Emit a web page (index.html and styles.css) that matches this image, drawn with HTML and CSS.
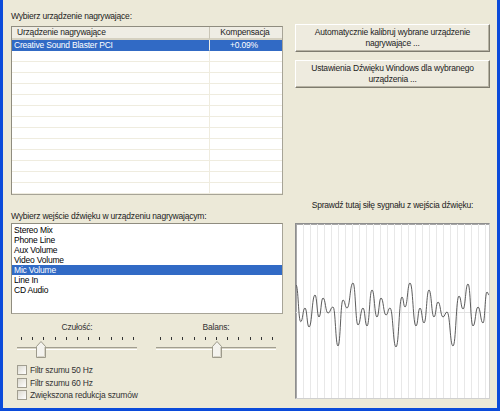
FILE: index.html
```html
<!DOCTYPE html>
<html lang="pl">
<head>
    <meta charset="UTF-8">
    <title>Kalibracja urządzenia nagrywającego</title>
    <link rel="stylesheet" href="styles.css">
</head>
<body>
    <div class="window">
        <!-- Lista urządzeń -->
        <div class="devices">
            <div class="caption">Wybierz urządzenie nagrywające:</div>
            <div class="listview">
                <table class="grid">
                    <thead>
                        <tr>
                            <th class="col-name">Urządzenie nagrywające</th>
                            <th class="col-comp">Kompensacja</th>
                        </tr>
                    </thead>
                    <tbody>
                        <tr class="selected"><td>Creative Sound Blaster PCI</td><td class="num">+0.09%</td></tr>
                        <tr><td></td><td></td></tr>
                        <tr><td></td><td></td></tr>
                        <tr><td></td><td></td></tr>
                        <tr><td></td><td></td></tr>
                        <tr><td></td><td></td></tr>
                        <tr><td></td><td></td></tr>
                        <tr><td></td><td></td></tr>
                        <tr><td></td><td></td></tr>
                        <tr><td></td><td></td></tr>
                        <tr><td></td><td></td></tr>
                        <tr><td></td><td></td></tr>
                        <tr><td></td><td></td></tr>
                        <tr><td></td><td></td></tr>
                    </tbody>
                </table>
            </div>
        </div>

        <div class="actions">
            <button class="btn">Automatycznie kalibruj wybrane urządzenie<br>nagrywające ...</button>
            <button class="btn">Ustawienia Dźwięku Windows dla wybranego<br>urządzenia ...</button>
        </div>

        <!-- Wejścia -->
        <div class="inputs">
            <div class="caption">Wybierz wejście dźwięku w urządzeniu nagrywającym:</div>
            <ul class="listbox">
                <li>Stereo Mix</li>
                <li>Phone Line</li>
                <li>Aux Volume</li>
                <li>Video Volume</li>
                <li class="selected">Mic Volume</li>
                <li>Line In</li>
                <li>CD Audio</li>
            </ul>

            <div class="sliders">
                <div class="slider-group">
                    <div class="slider-label">Czułość:</div>
                    <div class="slider">
                        <div class="ticks">
                            <span></span><span></span><span></span><span></span><span></span><span></span>
                            <span></span><span></span><span></span><span></span><span></span>
                        </div>
                        <div class="track"></div>
                        <svg class="thumb thumb-sens" width="10" height="17" viewBox="0 0 10 17">
                            <path d="M0.5 5.5 L5 0.5 L9.5 5.5 V16.5 H0.5 Z" fill="#F4F3EE" stroke="#9D9A8B"/>
                            <path d="M8.5 6 V15.5 H1.5" fill="none" stroke="#D6D3C6"/>
                        </svg>
                    </div>
                </div>
                <div class="slider-group">
                    <div class="slider-label">Balans:</div>
                    <div class="slider">
                        <div class="ticks">
                            <span></span><span></span><span></span><span></span><span></span><span></span>
                            <span></span><span></span><span></span><span></span><span></span>
                        </div>
                        <div class="track"></div>
                        <svg class="thumb thumb-bal" width="10" height="17" viewBox="0 0 10 17">
                            <path d="M0.5 5.5 L5 0.5 L9.5 5.5 V16.5 H0.5 Z" fill="#F4F3EE" stroke="#9D9A8B"/>
                            <path d="M8.5 6 V15.5 H1.5" fill="none" stroke="#D6D3C6"/>
                        </svg>
                    </div>
                </div>
            </div>

            <div class="checks">
                <label class="check"><span class="box"></span>Filtr szumu 50 Hz</label>
                <label class="check"><span class="box"></span>Filtr szumu 60 Hz</label>
                <label class="check"><span class="box"></span>Zwiększona redukcja szumów</label>
            </div>
        </div>

        <!-- Podgląd sygnału -->
        <div class="meter">
            <div class="caption center">Sprawdź tutaj siłę sygnału z wejścia dźwięku:</div>
            <div class="scope">
                <svg width="193" height="174" viewBox="296 224 193 174">
                    <path stroke="#E8E8E8" stroke-width="1" fill="none"
                        d="M303.5 224V398M310.5 224V398M317.5 224V398M324.5 224V398M331.5 224V398M338.5 224V398M345.5 224V398M352.5 224V398M359.5 224V398M366.5 224V398M373.5 224V398M380.5 224V398M387.5 224V398M394.5 224V398M401.5 224V398M408.5 224V398M415.5 224V398M422.5 224V398M429.5 224V398M436.5 224V398M443.5 224V398M450.5 224V398M457.5 224V398M464.5 224V398M471.5 224V398M478.5 224V398M485.5 224V398"/>
                    <path stroke="#E2E2E2" d="M296 312.5H489"/>
                    <path stroke="#4A4A4A" stroke-width="0.9" fill="none"
                        d="M296 285C298.35 285 298.35 321.7 300.7 321.7C302.85 321.7 302.85 308 305 308C307 308 307 327 309 327C312 327 312 295 315 295C317 295 317 317 319 317C321 317 321 298 323 298C325.5 298 325.5 313 328 313C330.5 313 330.5 307 333 307C335.5 307 335.5 346 338 346C340.5 346 340.5 300 343 300C345 300 345 308 347 308C350 308 350 283 353 283C355.5 283 355.5 325 358 325C360.5 325 360.5 308 363 308C365 308 365 326 367 326C369.5 326 369.5 290 372 290C374.5 290 374.5 317 377 317C379 317 379 298 381 298C383.5 298 383.5 315 386 315C388 315 388 308 390 308C393 308 393 347 396 347C399 347 399 297 402 297C403.5 297 403.5 307 405 307C407.5 307 407.5 283 410 283C413 283 413 326 416 326C418 326 418 308 420 308C422 308 422 323 424 323C426.5 323 426.5 290 429 290C431.5 290 431.5 317 434 317C436 317 436 302 438 302C440.5 302 440.5 317 443 317C445 317 445 312 447 312C450 312 450 346 453 346C456 346 456 296 459 296C461 296 461 309 463 309C465.5 309 465.5 284 468 284C470.5 284 470.5 326 473 326C475.5 326 475.5 307 478 307C480.5 307 480.5 323 483 323C485 323 485 292 487 292C488 292 488 295 489 295"/>
                </svg>
            </div>
        </div>
    </div>
</body>
</html>
```

FILE: styles.css
```css
* {
    margin: 0;
    padding: 0;
    box-sizing: border-box;
}

body {
    font: 8.5px/10px "Liberation Sans", Arial, sans-serif;
    letter-spacing: -0.2px;
    color: #000;
    background: #ECE9D8;
}

/* Window frame */
.window {
    width: 500px;
    height: 411px;
    background: #ECE9D8;
    border: 3px solid #0B4BDA;
    border-top: 0;
    padding: 11px 7px 0 8px;
    display: grid;
    grid-template-columns: 272px 195px;
    grid-template-rows: 184px auto;
    column-gap: 12px;
}

.caption {
    height: 10px;
    white-space: nowrap;
    color: #222;
}

.caption.center {
    text-align: center;
}

/* Device list */
.devices .caption {
    margin-bottom: 5px;
}

.listview {
    height: 169px;
    background: #fff;
    border: 1px solid #A7A497;
    border-top-color: #8F8C7F;
    border-left-color: #8F8C7F;
    overflow: hidden;
}

.grid {
    width: 100%;
    border-collapse: separate;
    border-spacing: 0;
    table-layout: fixed;
}

.grid th {
    height: 13px;
    font-weight: normal;
    text-align: left;
    line-height: 11px;
    padding: 0 0 0 5px;
    background: #EFEDE4;
    border-bottom: 2px solid #D5D1C1;
    color: #222;
}

.grid th.col-name {
    border-right: 1px solid #C9C5B6;
}

.grid th.col-comp {
    width: 72px;
    text-align: center;
    padding: 0 2px 0 0;
}

.grid td {
    height: 11px;
    line-height: 10px;
    padding: 0 0 0 2px;
    border-bottom: 1px solid #EFECDF;
    white-space: nowrap;
    overflow: hidden;
}

.grid td:first-child {
    border-right: 1px solid #EFECDF;
}

.grid td.num {
    text-align: center;
    padding: 0 4px 0 0;
}

.grid tr.selected td {
    background: #316AC5;
    color: #fff;
    border-bottom-color: #316AC5;
}

.grid tr.selected td:first-child {
    border-right-color: #F0EEE4;
}

/* Buttons */
.actions {
    padding-top: 13px;
    display: flex;
    flex-direction: column;
    gap: 8px;
}

.btn {
    height: 28px;
    font: 8.5px/11px "Liberation Sans", Arial, sans-serif;
    letter-spacing: -0.2px;
    color: #222;
    background: #EEEBDF;
    border: 1px solid;
    border-color: #FFFFFF #7E7B6E #7E7B6E #FFFFFF;
    box-shadow: inset -1px -1px 0 #B7B3A4;
    text-align: center;
    padding-bottom: 1px;
}

/* Input list */
.inputs {
    padding-top: 16px;
}

.inputs .caption {
    margin-bottom: 2px;
}

.listbox {
    list-style: none;
    height: 91px;
    background: #fff;
    border: 1px solid #A7A497;
    border-top-color: #8F8C7F;
    border-left-color: #8F8C7F;
}

.listbox li {
    height: 10px;
    line-height: 10px;
    padding-left: 2px;
}

.listbox li:first-child {
    margin-top: 1px;
}

.listbox li.selected {
    background: #316AC5;
    color: #fff;
}

/* Sliders */
.sliders {
    display: flex;
    gap: 19px;
    padding-left: 6px;
    margin-top: 8px;
}

.slider-group {
    width: 120px;
}

.slider-label {
    height: 10px;
    text-align: center;
    color: #333;
}

.slider {
    position: relative;
    height: 22px;
    margin-top: 4px;
}

.ticks {
    display: flex;
    justify-content: space-between;
    padding: 1px 3px 0 4px;
}

.ticks span {
    width: 1px;
    height: 3px;
    background: #333;
}

.track {
    margin-top: 7px;
    height: 3px;
    border-top: 1px solid #A19E90;
    border-bottom: 1px solid #fff;
    background: #DCD8C8;
}

.thumb {
    position: absolute;
    top: 5px;
}

.thumb-sens {
    left: 19px;
}

.thumb-bal {
    left: 56px;
}

/* Checkboxes */
.checks {
    margin-top: 6px;
    padding-left: 6px;
}

.check {
    display: flex;
    align-items: center;
    gap: 3px;
    height: 12.5px;
    color: #333;
}

.box {
    width: 10px;
    height: 10px;
    border: 1px solid #A19E90;
    background: linear-gradient(135deg, #DCDAD0, #FFFFFF);
}

/* Signal preview */
.meter {
    padding-top: 5px;
}

.meter .caption {
    margin-bottom: 13px;
}

.scope {
    width: 195px;
    height: 176px;
    background: #fff;
    border: 1px solid;
    border-color: #8E8E8E #D0D0D0 #D0D0D0 #8E8E8E;
    box-shadow: inset 1px 1px 0 #A8A8A8;
}

.scope svg {
    display: block;
}
```
